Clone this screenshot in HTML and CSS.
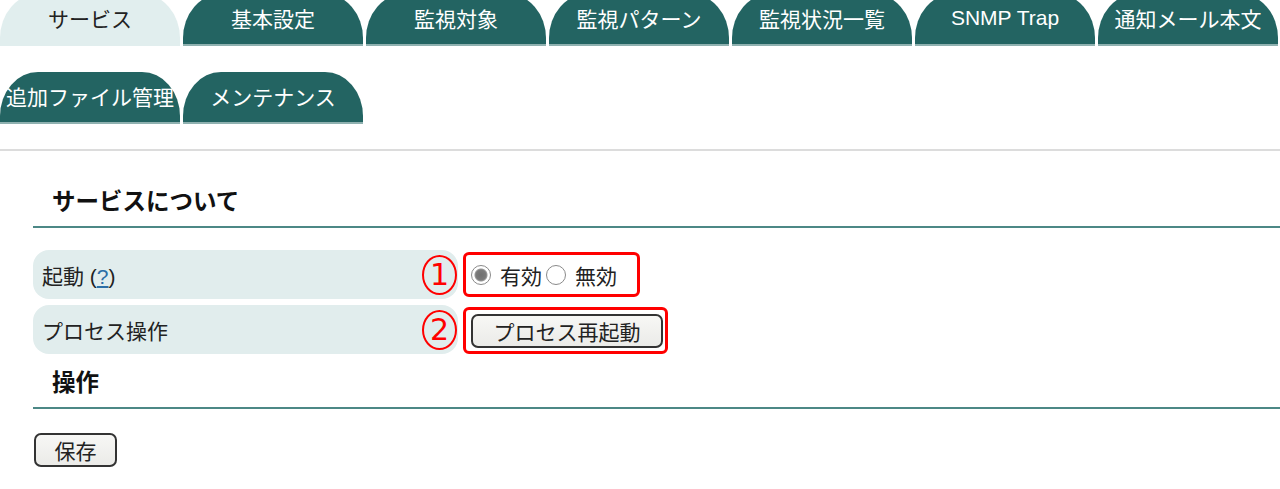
FILE: index.html
```html
<!DOCTYPE html>
<html lang="ja">
<head>
  <meta charset="UTF-8" />
  <title>サービス</title>
  <meta name="viewport" content="width=device-width, initial-scale=1.0" />
  <link rel="stylesheet" href="styles.css">
</head>
<body>

  <nav class="pestanas">
    <a class="pestana activa" href="#">サービス</a>
    <a class="pestana" href="#">基本設定</a>
    <a class="pestana" href="#">監視対象</a>
    <a class="pestana" href="#">監視パターン</a>
    <a class="pestana" href="#">監視状況一覧</a>
    <a class="pestana" href="#">SNMP Trap</a>
    <a class="pestana" href="#">通知メール本文</a>
    <a class="pestana" href="#">追加ファイル管理</a>
    <a class="pestana" href="#">メンテナンス</a>
  </nav>

  <div class="separador"></div>

  <main class="contenido">
    <h2 class="titulo">サービスについて</h2>

    <div class="tabla">
      <div class="fila">
        <div class="etiqueta">
          <span>起動 (<a href="#">?</a>)</span>
          <span class="marca">1</span>
        </div>
        <div class="valor">
          <div class="recuadro">
            <label><input type="radio" name="arranque" checked /> 有効</label>
            <label><input type="radio" name="arranque" /> 無効</label>
          </div>
        </div>
      </div>
      <div class="fila">
        <div class="etiqueta">
          <span>プロセス操作</span>
          <span class="marca">2</span>
        </div>
        <div class="valor">
          <div class="recuadro ancho">
            <button class="boton boton-largo">プロセス再起動</button>
          </div>
        </div>
      </div>
    </div>

    <h2 class="titulo titulo-op">操作</h2>

    <button class="boton boton-guardar">保存</button>
  </main>

</body>
</html>
```

FILE: styles.css
```css
body {
  margin: 0;
  padding: 0;
  font-family: "Liberation Sans", "Noto Sans CJK JP", sans-serif;
  font-size: 21px;
  color: #222;
  background: #fff;
  overflow: hidden;
}

.pestanas {
  display: flex;
  flex-wrap: wrap;
  gap: 26px 3px;
  margin-top: -6px;
  width: 1280px;
}

.pestana {
  width: 180px;
  height: 52px;
  box-sizing: border-box;
  display: flex;
  align-items: center;
  justify-content: center;
  padding-bottom: 2px;
  background: #236462;
  color: #fff;
  text-decoration: none;
  font-size: 21px;
  white-space: nowrap;
  border-radius: 38px 38px 0 0 / 44px 44px 0 0;
  border-bottom: 2px solid #8fb1b0;
}

.pestana.activa {
  background: #e1eeee;
  color: #222;
  border-bottom-color: #e1eeee;
}

.separador {
  margin-top: 25px;
  height: 2px;
  background: #dcdcdc;
}

.contenido {
  padding-left: 33px;
}

.titulo {
  margin: 36px 0 0;
  padding: 0 0 9px 19px;
  font-size: 23.5px;
  line-height: 30px;
  font-weight: bold;
  color: #111;
  border-bottom: 2px solid #4c8886;
}

.titulo-op {
  margin-top: 14px;
}

.tabla {
  margin-top: 22px;
  display: flex;
  flex-direction: column;
  gap: 6px;
}

.fila {
  display: flex;
  align-items: center;
  gap: 5px;
}

.etiqueta {
  width: 425px;
  height: 49px;
  box-sizing: border-box;
  padding: 0 1px 0 9px;
  display: flex;
  align-items: center;
  justify-content: space-between;
  background: #e1eded;
  border-radius: 16px;
}

.etiqueta a {
  color: #2b6ea6;
}

.marca {
  width: 35px;
  height: 40px;
  box-sizing: border-box;
  border: 2px solid #f00;
  border-radius: 50%;
  color: #f00;
  font-family: "DejaVu Sans", sans-serif;
  font-size: 30px;
  line-height: 36px;
  text-align: center;
}

.recuadro {
  width: 177px;
  height: 45px;
  box-sizing: border-box;
  border: 3px solid #f00;
  border-radius: 6px;
  display: flex;
  align-items: center;
  gap: 4px;
  padding-left: 5px;
}

.recuadro.ancho {
  width: 205px;
  height: 47px;
  margin-top: 2px;
}

.recuadro label {
  display: flex;
  align-items: center;
  gap: 9px;
}

.recuadro input[type="radio"] {
  appearance: none;
  margin: 0;
  width: 20px;
  height: 20px;
  border: 1px solid #8a8a8a;
  border-radius: 50%;
  background: #fff;
}

.recuadro input[type="radio"]:checked {
  background: radial-gradient(circle, #6f6f6f 0, #7a7a7a 5px, #9a9a9a 6px, #fff 7px);
}

.boton {
  font-family: "Liberation Sans", "Noto Sans CJK JP", sans-serif;
  font-size: 21px;
  color: #222;
  background: linear-gradient(#f7f7f5, #ebebe8);
  border: 2px solid #333;
  border-radius: 7px;
  padding: 0;
  cursor: pointer;
}

.boton-largo {
  width: 192px;
  height: 34px;
}

.boton-guardar {
  margin-top: 24px;
  margin-left: 1px;
  width: 83px;
  height: 34px;
}
```
